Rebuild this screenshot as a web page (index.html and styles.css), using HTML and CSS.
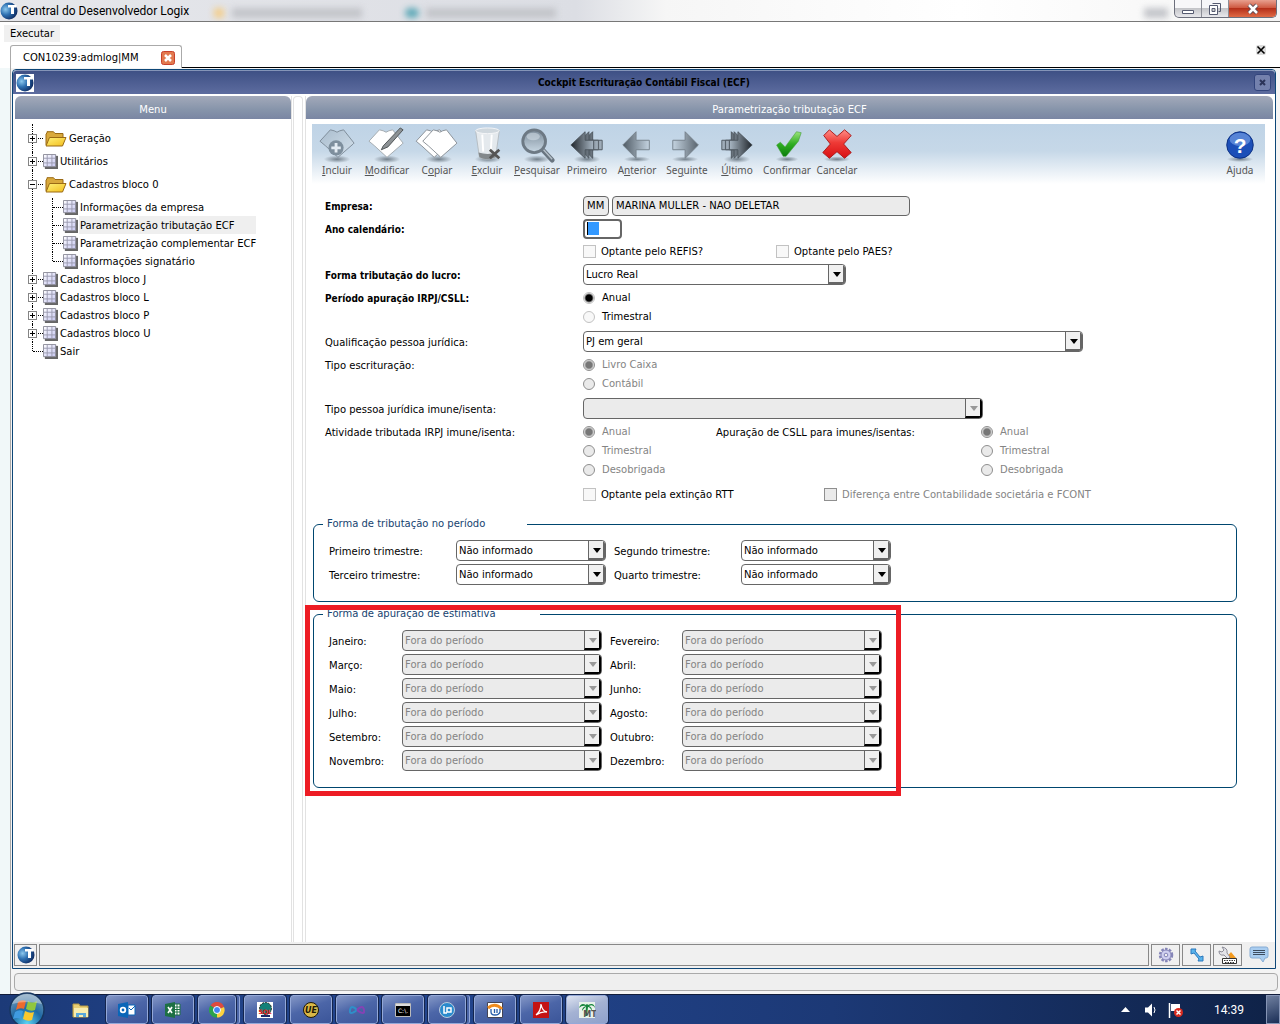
FILE: index.html
```html
<!DOCTYPE html>
<html lang="pt-BR">
<head>
<meta charset="utf-8">
<title>Central do Desenvolvedor Logix</title>
<link rel="stylesheet" href="styles.css">
</head>
<body>
<svg class="defs" aria-hidden="true">
  <defs>
    <radialGradient id="gBlue" cx="30%" cy="40%" r="75%"><stop offset="0" stop-color="#8cc8ee"/><stop offset=".45" stop-color="#2d6fb0"/><stop offset="1" stop-color="#0b2358"/></radialGradient>
    <linearGradient id="gCell" x2="1" y2="1"><stop offset="0" stop-color="#fff"/><stop offset="1" stop-color="#c6c6f2"/></linearGradient>
    <linearGradient id="gFolder" x2="1" y2="1"><stop offset="0" stop-color="#fff27a"/><stop offset="1" stop-color="#f2bd1c"/></linearGradient>
    <linearGradient id="gShirt" x2="1" y2="1"><stop offset="0" stop-color="#a9bccd"/><stop offset="1" stop-color="#d5e2ec"/></linearGradient>
    <linearGradient id="gGreyL"><stop offset="0" stop-color="#4f5a64"/><stop offset="1" stop-color="#c4d3e0"/></linearGradient>
    <linearGradient id="gGreyR"><stop offset="0" stop-color="#c4d3e0"/><stop offset="1" stop-color="#59646e"/></linearGradient>
    <linearGradient id="gDarkL"><stop offset="0" stop-color="#20262c"/><stop offset="1" stop-color="#a9b7c4"/></linearGradient>
    <linearGradient id="gDarkR"><stop offset="0" stop-color="#a9b7c4"/><stop offset="1" stop-color="#20262c"/></linearGradient>
    <linearGradient id="gLens" x2="0" y2="1"><stop offset="0" stop-color="#7b8b99"/><stop offset="1" stop-color="#c9d8e4"/></linearGradient>
    <linearGradient id="gGreen" x2="0" y2="1"><stop offset="0" stop-color="#9be27a"/><stop offset=".5" stop-color="#2fae22"/><stop offset="1" stop-color="#0b7d0c"/></linearGradient>
    <linearGradient id="gRed" x2="0" y2="1"><stop offset="0" stop-color="#ff8d86"/><stop offset=".45" stop-color="#ee3a36"/><stop offset="1" stop-color="#d80f12"/></linearGradient>
    <radialGradient id="gShadow"><stop offset="0" stop-color="#5b6873" stop-opacity=".8"/><stop offset="1" stop-color="#5b6873" stop-opacity="0"/></radialGradient>
    <radialGradient id="gOrb" cx="50%" cy="90%" r="90%"><stop offset="0" stop-color="#5ad4f4"/><stop offset=".5" stop-color="#1f6aa5"/><stop offset="1" stop-color="#7d9db8"/></radialGradient>
  </defs>
  <symbol id="globe" viewBox="0 0 18 18"><circle cx="9" cy="9" r="8.5" fill="url(#gBlue)"/><path d="M8 3h8.500v2.500h-2.500V12h-3V5.500H8z" fill="#fff"/></symbol>
  <symbol id="grid" viewBox="0 0 16 16"><path d="M2 2h14v14H2z" fill="#666"/><path d="M.5.5h13v13H.5z" fill="url(#gCell)" stroke="#8c8c99"/><path d="M4.500 1v12M9.500 1v12M1 4.500h12M1 9.500h12" stroke="#9a9ab0"/></symbol>
  <symbol id="folder" viewBox="0 0 22 16"><path d="M1 14V3l1-1V.7h6.500L10 2.500h8V7" fill="#d9a93c" stroke="#9a6a14"/><path d="M1 15 4.500 6.500H21L17.500 15z" fill="url(#gFolder)" stroke="#9a6a14"/></symbol>
  <symbol id="shirt" viewBox="0 0 38 33"><path d="M12 2 1 14l6 5 13 12 16-14 1-1L26 2l-4 1q-3 3-6 0z"/></symbol>
</svg>

<header class="titlebar">
  <span class="ghost g1"></span><span class="ghost g2"></span><span class="ghost g3"></span><span class="ghost g4"></span><span class="ghost g5"></span>
  <svg class="i18" viewBox="0 0 18 18"><use href="#globe"/></svg>
  <h1>Central do Desenvolvedor Logix</h1>
  <div class="winbtns">
    <button aria-label="Minimizar"><svg width="14" height="14"><path d="M1.500 8.500h11v3h-11z" fill="#fff" stroke="#555a70"/></svg></button>
    <button aria-label="Restaurar"><svg width="14" height="14"><path d="M4.500 1.500h8v8h-2" fill="none" stroke="#555a70"/><path d="M1.500 3.500h8v9h-8z" fill="#fff" stroke="#555a70"/><path d="M4 6.500h3v3H4z" fill="#ccc" stroke="#555a70"/></svg></button>
    <button class="close" aria-label="Fechar"><svg width="14" height="14"><path d="m3 3 8 8M11 3l-8 8" stroke="#5b4a55" stroke-width="4.500"/><path d="m3 3 8 8M11 3l-8 8" stroke="#fff" stroke-width="2.500"/></svg></button>
  </div>
</header>

<nav class="menubar"><button>Executar</button></nav>

<div class="tabs">
  <div class="tab"><span>CON10239:admlog|MM</span><button aria-label="Fechar aba"><svg width="14" height="14"><rect x=".5" y=".5" width="13" height="13" rx="2" fill="#e2794f" stroke="#c8402c"/><path d="m4 4 6 6m0-6-6 6" stroke="#fff" stroke-width="2.500"/></svg></button></div>
  <div class="tabline"><button aria-label="Fechar tudo"><svg width="10" height="10"><rect width="10" height="10" rx="2" fill="#ddd"/><path d="m1.500 1.500 7 7m0-7-7 7" stroke="#000" stroke-width="1.600"/></svg></button></div>
</div>

<main class="desk">
  <section class="win">
    <header class="winhead">
      <svg class="i18 boxed" viewBox="0 0 18 18"><use href="#globe"/></svg>
      <h2>Cockpit Escrituração Contábil Fiscal (ECF)</h2>
      <button aria-label="Fechar janela"><svg width="7" height="7"><path d="m1 1 5 5m0-5-5 5" stroke="#2b3358" stroke-width="2"/></svg></button>
    </header>
    <div class="panes">
      <aside class="pane side">
        <h3>Menu</h3>
        <ul class="tree">
          <li class="tall"><div><button class="plus" aria-label="Expandir"></button><a href="#"><svg class="fold"><use href="#folder"/></svg>Geração</a></div></li>
          <li><div><button class="plus" aria-label="Expandir"></button><a href="#"><svg class="grid"><use href="#grid"/></svg>Utilitários</a></div></li>
          <li class="tall"><div><button aria-label="Recolher"></button><a href="#"><svg class="fold"><use href="#folder"/></svg>Cadastros bloco 0</a></div>
            <ul>
              <li><div><a href="#"><svg class="grid"><use href="#grid"/></svg>Informações da empresa</a></div></li>
              <li><div><a href="#" class="sel"><svg class="grid"><use href="#grid"/></svg>Parametrização tributação ECF</a></div></li>
              <li><div><a href="#"><svg class="grid"><use href="#grid"/></svg>Parametrização complementar ECF</a></div></li>
              <li><div><a href="#"><svg class="grid"><use href="#grid"/></svg>Informações signatário</a></div></li>
            </ul>
          </li>
          <li><div><button class="plus" aria-label="Expandir"></button><a href="#"><svg class="grid"><use href="#grid"/></svg>Cadastros bloco J</a></div></li>
          <li><div><button class="plus" aria-label="Expandir"></button><a href="#"><svg class="grid"><use href="#grid"/></svg>Cadastros bloco L</a></div></li>
          <li><div><button class="plus" aria-label="Expandir"></button><a href="#"><svg class="grid"><use href="#grid"/></svg>Cadastros bloco P</a></div></li>
          <li><div><button class="plus" aria-label="Expandir"></button><a href="#"><svg class="grid"><use href="#grid"/></svg>Cadastros bloco U</a></div></li>
          <li><div><a href="#"><svg class="grid"><use href="#grid"/></svg>Sair</a></div></li>
        </ul>
      </aside>
      <div class="split"></div>
      <section class="pane body">
        <h3>Parametrização tributação ECF</h3>
        <div class="toolbar">
          <button><svg viewBox="0 0 40 38"><ellipse cx="20" cy="34" rx="14" ry="4" fill="url(#gShadow)"/><use href="#shirt" x="1" y="1" width="38" height="33" fill="url(#gShirt)" stroke="#7d8b97" stroke-width="1"/><circle cx="19" cy="22" r="8" fill="#7e8f9d"/><path d="M19 17v10M14 22h10" stroke="#e4ecf3" stroke-width="3"/></svg><span><u>I</u>ncluir</span></button>
          <button><svg viewBox="0 0 40 38"><ellipse cx="20" cy="34" rx="14" ry="4" fill="url(#gShadow)"/><use href="#shirt" x="0" y="1" width="38" height="33" fill="#fff" stroke="#a3a9ae" stroke-width="1"/><path d="m16 20 18-19 3 2-16 18-7 3z" fill="#8d9295" stroke="#4c5154"/></svg><span><u>M</u>odificar</span></button>
          <button><svg viewBox="0 0 44 38"><ellipse cx="24" cy="34" rx="14" ry="4" fill="url(#gShadow)"/><use href="#shirt" x="-1" y="1" width="38" height="33" fill="#fff" stroke="#888f95" stroke-width="1"/><use href="#shirt" x="6" y="1" width="38" height="33" fill="#fff" stroke="#888f95" stroke-width="1"/></svg><span>C<u>o</u>piar</span></button>
          <button><svg viewBox="0 0 40 38"><ellipse cx="21" cy="34" rx="14" ry="4" fill="url(#gShadow)"/><path d="m8 4 4 28q8 4 17 0l4-28z" fill="#e4e9ed" stroke="#b5bcc2"/><path d="m11 27 1 5q8 4 17 0l1-5q-9 3-19 0z" fill="#83888b"/><ellipse cx="20.500" cy="4" rx="12.500" ry="3" fill="#d0d8de" stroke="#f4f6f8"/><path d="m15 8 1 18M25 8l-1 18" stroke="#fff" stroke-width="2"/><path d="m23 24 10 9m0-9-10 9" stroke="#555" stroke-width="3"/></svg><span><u>E</u>xcluir</span></button>
          <button><svg viewBox="0 0 40 38"><ellipse cx="20" cy="34" rx="14" ry="4" fill="url(#gShadow)"/><path d="m25 23 11 12" stroke="#697580" stroke-width="5" stroke-linecap="round"/><path d="m26 23 10 11" stroke="#b4bfc8" stroke-width="1.500"/><circle cx="17" cy="15" r="12" fill="url(#gLens)" stroke="#6d7984" stroke-width="3"/><ellipse cx="16" cy="10" rx="7" ry="4" fill="#dce6ee" opacity=".5"/></svg><span><u>P</u>esquisar</span></button>
          <button><svg viewBox="0 0 40 38"><ellipse cx="20" cy="34" rx="14" ry="4" fill="url(#gShadow)"/><g fill="url(#gDarkL)" stroke="#4d575f"><path d="M12 19 26 5v9h10v10H26v9z"/><path d="M8 19 22 5v9h10v10H22v9z"/><path d="M3 19 18 5v9h9v10h-9v9z"/></g></svg><span>Primeiro</span></button>
          <button><svg viewBox="0 0 40 38"><ellipse cx="20" cy="34" rx="14" ry="3" fill="url(#gShadow)"/><path d="M5 19 19 5v9h14v10H19v9z" fill="url(#gGreyL)" stroke="#75818b"/></svg><span>A<u>n</u>terior</span></button>
          <button><svg viewBox="0 0 40 38"><ellipse cx="18" cy="34" rx="14" ry="3" fill="url(#gShadow)"/><path d="M32 19 18 5v9H5v10h13v9z" fill="url(#gGreyR)" stroke="#75818b"/></svg><span>Se<u>g</u>uinte</span></button>
          <button><svg viewBox="0 0 40 38"><ellipse cx="20" cy="34" rx="14" ry="4" fill="url(#gShadow)"/><g fill="url(#gDarkR)" stroke="#4d575f"><path d="M28 19 14 5v9H4v10h10v9z"/><path d="M31 19 17 5v9H8v10h9v9z"/><path d="M36 19 21 5v9h-9v10h9v9z"/></g></svg><span><u>Ú</u>ltimo</span></button>
          <button><svg viewBox="0 0 40 38"><ellipse cx="20" cy="34" rx="12" ry="3" fill="url(#gShadow)"/><path d="m9 19 4-3 5 5L30 5l5 1-3 9-13 16h-3z" fill="url(#gGreen)" stroke="#3f9c35" stroke-width=".6"/></svg><span>Confirmar</span></button>
          <button><svg viewBox="0 0 40 38"><ellipse cx="20" cy="34" rx="14" ry="3" fill="url(#gShadow)"/><path d="m6 9 6-6 8 7 8-7 7 6-8 9 8 9-7 6-8-7-8 7-7-6 8-9z" fill="url(#gRed)" stroke="#a8191a"/></svg><span>Cancelar</span></button>
          <button class="help"><svg viewBox="0 0 40 38"><ellipse cx="20" cy="34" rx="14" ry="3" fill="url(#gShadow)"/><circle cx="20" cy="19" r="14" fill="#1c4fb8" stroke="#0c2f80"/><ellipse cx="20" cy="13" rx="11" ry="7" fill="#7fa8ea" opacity=".6"/><text x="20" y="27" text-anchor="middle" font-size="22" font-weight="bold" fill="#fff">?</text></svg><span>Ajuda</span></button>
        </div>

        <form class="form">
          <div class="row"><label class="lb b" for="emp">Empresa:</label><input id="emp" class="txt w26" value="MM" readonly><input class="txt w298" value="MARINA MULLER - NÃO DELETAR" aria-label="Nome da empresa" readonly></div>
          <div class="row"><label class="lb b" for="ano">Ano calendário:</label><span class="year"><i></i><input id="ano"></span></div>
          <div class="row in"><label class="ck w193"><input type="checkbox">Optante pelo REFIS?</label><label class="ck"><input type="checkbox">Optante pelo PAES?</label></div>
          <div class="row"><label class="lb b" for="forma">Forma tributação do lucro:</label><span class="sel-box w263"><select id="forma"><option>Lucro Real</option></select></span></div>
          <div class="row group"><span class="lb b">Período apuração IRPJ/CSLL:</span><div class="radios"><label><input type="radio" name="per" checked>Anual</label><label><input type="radio" name="per">Trimestral</label></div></div>
          <div class="row"><label class="lb" for="qual">Qualificação pessoa jurídica:</label><span class="sel-box w500"><select id="qual"><option>PJ em geral</option></select></span></div>
          <div class="row group"><span class="lb">Tipo escrituração:</span><div class="radios off"><label><input type="radio" name="esc" checked disabled>Livro Caixa</label><label><input type="radio" name="esc" disabled>Contábil</label></div></div>
          <div class="row"><label class="lb" for="imune">Tipo pessoa jurídica imune/isenta:</label><span class="sel-box off w400"><select id="imune" disabled><option></option></select></span></div>
          <div class="row group"><span class="lb">Atividade tributada IRPJ imune/isenta:</span><div class="radios off w133"><label><input type="radio" name="atv" checked disabled>Anual</label><label><input type="radio" name="atv" disabled>Trimestral</label><label><input type="radio" name="atv" disabled>Desobrigada</label></div><span class="lb2">Apuração de CSLL para imunes/isentas:</span><div class="radios off"><label><input type="radio" name="csll" checked disabled>Anual</label><label><input type="radio" name="csll" disabled>Trimestral</label><label><input type="radio" name="csll" disabled>Desobrigada</label></div></div>
          <div class="row in"><label class="ck w241"><input type="checkbox">Optante pela extinção RTT</label><label class="ck off"><input type="checkbox" disabled>Diferença entre Contabilidade societária e FCONT</label></div>

          <fieldset class="quarters">
            <legend>Forma de tributação no período</legend>
            <label for="t1">Primeiro trimestre:</label><span class="sel-box"><select id="t1"><option>Não informado</option></select></span>
            <label for="t2">Segundo trimestre:</label><span class="sel-box"><select id="t2"><option>Não informado</option></select></span>
            <label for="t3">Terceiro trimestre:</label><span class="sel-box"><select id="t3"><option>Não informado</option></select></span>
            <label for="t4">Quarto trimestre:</label><span class="sel-box"><select id="t4"><option>Não informado</option></select></span>
          </fieldset>
          <div class="marked">
            <fieldset class="months">
              <legend>Forma de apuração de estimativa</legend>
              <label for="m1">Janeiro:</label><span class="sel-box off"><select id="m1" disabled><option>Fora do período</option></select></span>
              <label for="m2">Fevereiro:</label><span class="sel-box off"><select id="m2" disabled><option>Fora do período</option></select></span>
              <label for="m3">Março:</label><span class="sel-box off"><select id="m3" disabled><option>Fora do período</option></select></span>
              <label for="m4">Abril:</label><span class="sel-box off"><select id="m4" disabled><option>Fora do período</option></select></span>
              <label for="m5">Maio:</label><span class="sel-box off"><select id="m5" disabled><option>Fora do período</option></select></span>
              <label for="m6">Junho:</label><span class="sel-box off"><select id="m6" disabled><option>Fora do período</option></select></span>
              <label for="m7">Julho:</label><span class="sel-box off"><select id="m7" disabled><option>Fora do período</option></select></span>
              <label for="m8">Agosto:</label><span class="sel-box off"><select id="m8" disabled><option>Fora do período</option></select></span>
              <label for="m9">Setembro:</label><span class="sel-box off"><select id="m9" disabled><option>Fora do período</option></select></span>
              <label for="m10">Outubro:</label><span class="sel-box off"><select id="m10" disabled><option>Fora do período</option></select></span>
              <label for="m11">Novembro:</label><span class="sel-box off"><select id="m11" disabled><option>Fora do período</option></select></span>
              <label for="m12">Dezembro:</label><span class="sel-box off"><select id="m12" disabled><option>Fora do período</option></select></span>
            </fieldset>
            <div class="highlight"></div>
          </div>
        </form>
      </section>
    </div>
    <footer class="status">
      <button class="logo" aria-label="TOTVS"><svg class="i18" viewBox="0 0 18 18"><use href="#globe"/></svg></button>
      <div class="msg"></div>
      <button aria-label="Configurações"><svg width="16" height="16" viewBox="0 0 16 16"><circle cx="8" cy="8" r="6" fill="none" stroke="#8585b8" stroke-width="2.500" stroke-dasharray="2.500 1.300"/><circle cx="8" cy="8" r="5" fill="#cfcff0" stroke="#8585b8"/><circle cx="8" cy="8" r="1.800" fill="#f0f0f0" stroke="#8585b8"/></svg></button>
      <button aria-label="Redimensionar"><svg width="14" height="14" viewBox="0 0 14 14"><path d="M1 1h5L5 3l5 6 3-1v5H8l1-2-5-6-3 1z" fill="#5bb4ec" stroke="#2a78bd"/></svg></button>
      <button aria-label="Ferramentas"><svg width="20" height="20" viewBox="0 0 20 20"><path d="M8 13 13 7l5 6z" fill="#f39a1e"/><path d="m4 2 2 3-2 2-3-1q0 5 5 4l4 4 2-2-3-4q1-5-5-6z" fill="#e3e3e8" stroke="#8d8d99"/><path d="M4.500 13.500h14v5h-14z" fill="#fff" stroke="#333"/><path d="M6 15.500h11M7 17.500h9" stroke="#333" stroke-dasharray="1.500 1"/></svg></button>
      <button class="chat" aria-label="Mensagens"><svg width="20" height="18" viewBox="0 0 20 18"><path d="M3 1h14q2 0 2 2v7q0 2-2 2h-1l-2 4-3-4H3q-2 0-2-2V3q0-2 2-2z" fill="#a9cdf0" stroke="#86acd4"/><path d="M4 4.500h12M4 6.500h12M4 8.500h12" stroke="#3c4c60"/></svg></button>
    </footer>
  </section>
  <div class="outer-status"></div>
</main>

<footer class="taskbar">
  <button class="orb" aria-label="Iniciar"><svg width="38" height="36" viewBox="0 0 38 36"><circle cx="19" cy="18" r="17" fill="url(#gOrb)" stroke="#17365f" stroke-width="1.500"/><path d="M10 10q4-3 8-1l-2 8q-4-2-8 1z" fill="#ee6a2c"/><path d="M20 9q4 3 9 0l-2 9q-4 2-9-1z" fill="#90c63e"/><path d="M7 20q4-3 8-1l-2 8q-4-2-8 0z" fill="#3f9be0"/><path d="M17 19q5 3 9 1l-2 8q-4 2-9-1z" fill="#fbc92e"/><path d="M4 12Q8 2 19 2t15 10q-15-4-30 0z" fill="#fff" opacity=".35"/></svg></button>
  <button class="plain" aria-label="Explorador"><svg width="18" height="16" viewBox="0 0 18 16"><path d="M1 2h6l1 2h8v11H1z" fill="#e9cf74" stroke="#b79a45"/><path d="M2 6h14v9H2z" fill="#f8ecae"/><path d="M4 15v-4h10v4h-3v-2H7v2z" fill="#58a7da"/></svg></button>
  <div class="apps">
    <button aria-label="Outlook"><svg width="18" height="18"><path d="M0 3 10 1v16L0 15z" fill="#0a66b8"/><path d="M10 4h7v10h-7z" fill="#fff" stroke="#0a66b8"/><path d="m11 7 2 2 4-4" stroke="#0a66b8" fill="none"/><circle cx="5" cy="9" r="2.300" fill="none" stroke="#fff" stroke-width="1.800"/></svg></button>
    <button aria-label="Excel"><svg width="18" height="18"><path d="M9 3h7v11H9z" fill="#fff" stroke="#1d7044"/><path d="M10 6h6M10 8.500h6M10 11h6M13 3v11" stroke="#1d7044"/><path d="M1 3 11 1v16L1 15z" fill="#1d7044"/><path d="m4 6 4 6m0-6-4 6" stroke="#fff" stroke-width="1.600"/></svg></button>
    <button class="multi" aria-label="Chrome"><svg width="16" height="16" viewBox="0 0 16 16"><path d="M8 8 1.500 3.500A7.500 7.500 0 0 1 15 5z" fill="#dd4b3e"/><path d="M8 8 15 5A7.500 7.500 0 0 1 8 15.500z" fill="#fdd23e"/><path d="M8 8v7.500A7.500 7.500 0 0 1 1.500 3.500z" fill="#2ba24c"/><circle cx="8" cy="8" r="3.500" fill="#4285f4" stroke="#fff"/></svg></button>
    <button aria-label="SQL"><svg width="16" height="16"><path d="M0 0h16v16H0z" fill="#fff"/><circle cx="8.500" cy="6.500" r="6" fill="#138078" stroke="#222" stroke-dasharray="2 1"/><path d="M4 13h9v2H4z" fill="#1c2a6a"/><text x="8" y="12" text-anchor="middle" font-size="6" font-weight="bold" fill="#e11">SQL</text></svg></button>
    <button aria-label="UltraEdit"><svg width="16" height="16"><circle cx="8" cy="8" r="7.500" fill="#d9b847" stroke="#1d1805"/><text x="8" y="11" text-anchor="middle" font-size="8" font-weight="bold" font-style="italic" fill="#1d1805">UE</text></svg></button>
    <button aria-label="Visual Studio"><svg width="16" height="16" fill="none" stroke-width="2"><path d="M8 8q-6-6-7 0t7 0" stroke="#2f8fc8"/><path d="M8 8q6-6 7 0t-7 0" stroke="#8443b4"/></svg></button>
    <button aria-label="Prompt"><svg width="16" height="14"><path d="M.5.5h15v13H.5z" fill="#000" stroke="#bbb"/><path d="M1 1h14v2H1z" fill="#ddd"/><text x="8" y="10" text-anchor="middle" font-size="6" fill="#fff">C:\.</text></svg></button>
    <button class="multi" aria-label="Logix"><svg width="16" height="16"><circle cx="8" cy="8" r="7.500" fill="#2a8bcd" stroke="#bcd"/><path d="M5 4v7h3M8 6h4v4H8z" stroke="#fff" stroke-width="1.500" fill="none"/></svg></button>
    <button aria-label="Atendimento"><svg width="16" height="16"><path d="M.5.500h15v15H.5z" fill="#fff" stroke="#445"/><path d="M1 6q7-6 14 1" stroke="#f08c1e" stroke-width="3" fill="none"/><path d="M4 7v3q0 3 4 3t5-3V7M7.500 7v4M10 7v4" stroke="#245ba8" fill="none" stroke-width="1.300"/></svg></button>
    <button aria-label="Adobe Reader"><svg width="16" height="16"><path d="M0 0h16v16H0z" fill="#c41313"/><path d="M3 13q5-4 5-11 1 7 6 8-5-1-11 3z" fill="none" stroke="#fff" stroke-width="1.300"/></svg></button>
    <button class="active" aria-label="MT"><svg width="18" height="18"><path d="M1 1h16v16H1z" fill="#e8f2ea"/><path d="M8 4q-5-3-7 3 3-3 7-2-4 1-4 5 3-4 4-4l-1 9h2l1-9q2 0 4 4 0-4-3-5 4-2 6 2-1-6-7-3-1-2-2 0z" fill="#16863c"/><text x="12" y="16" text-anchor="middle" font-size="8" font-weight="bold" fill="#555">MT</text></svg></button>
  </div>
  <div class="tray">
    <svg width="9" height="5"><path d="M0 5 4.500 0 9 5z" fill="#fff"/></svg>
    <svg width="14" height="14"><path d="M1 4.500h3l4-4v13l-4-4H1z" fill="#fff"/><path d="M10 4q2 3 0 6" fill="none" stroke="#fff"/></svg>
    <svg width="16" height="16"><path d="M1.500 1v15" stroke="#fff" stroke-width="1.500"/><path d="M3 2h9v7H3z" fill="#fff"/><circle cx="10.500" cy="10.500" r="4.500" fill="#d92b1f"/><path d="m8.500 8.500 4 4m0-4-4 4" stroke="#fff" stroke-width="1.500"/></svg>
    <time>14:39</time>
    <button class="peek" aria-label="Mostrar área de trabalho"></button>
  </div>
</footer>
</body>
</html>
```
FILE: styles.css
```css
*, *::before, *::after { box-sizing: border-box; }
body { margin: 0; min-height: 100vh; display: flex; flex-direction: column; background: #fff; color: #000; font: 10px/14px "DejaVu Sans", Verdana, sans-serif; }
button, input, select { font: inherit; color: inherit; margin: 0; padding: 0; border: 0; background: none; }
h1, h2, h3, ul { margin: 0; padding: 0; font: inherit; list-style: none; }
a { color: inherit; text-decoration: none; }
svg { display: block; flex: none; }
.defs { position: absolute; width: 0; height: 0; }
.i18 { width: 18px; height: 18px; }

.titlebar { position: relative; display: flex; align-items: center; height: 22px; overflow: hidden; border-bottom: 1px solid #777; background: linear-gradient(90deg, #e6e7eb, #dcdee4 45%, #f6f6f6 52%, #fff 75%, #f4f4f4); }
.titlebar h1 { position: relative; flex: 1; padding-left: 3px; font: 12px/20px Roboto, sans-serif; }
.ghost { position: absolute; top: 8px; height: 10px; filter: blur(3px); background: #c3c5ca; }
.g1 { left: 214px; width: 10px; background: #f3cf8e; }
.g2 { left: 232px; width: 130px; }
.g3 { left: 405px; width: 14px; border-radius: 8px; background: #5fa9b8; }
.g4 { left: 426px; width: 130px; }
.g5 { right: 112px; width: 24px; }
.winbtns { position: relative; display: flex; align-self: flex-start; height: 18px; margin-right: 3px; border: 1px solid #6c6f7c; border-top: 0; border-radius: 0 0 5px 5px; overflow: hidden; background: linear-gradient(#f7f7f9 45%, #c4c5c9 50%, #e8e8ec); }
.winbtns button { display: grid; place-items: center; width: 27px; border-right: 1px solid #8b8d96; }
.winbtns .close { width: 47px; border: 0; background: linear-gradient(#e8a08f, #cf5a42 45%, #b5301a 50%, #e06a45); }

.menubar { height: 23px; padding: 3px 4px; }
.menubar button { height: 17px; padding: 0 6px; background: #f0f0f0; }

.tabs { display: flex; height: 23px; padding-left: 10px; }
.tab { display: flex; align-items: center; justify-content: space-between; width: 172px; padding: 1px 6px 0 12px; border: 1px solid #aaa; border-bottom: 0; border-radius: 3px 3px 0 0; }
.tabline { flex: 1; display: flex; justify-content: flex-end; align-items: flex-start; padding-right: 14px; border-bottom: 1px solid #000; }

.desk { flex: 1; display: flex; flex-direction: column; margin-left: 10px; padding: 1px 2px 2px 1px; border-left: 1px solid #aaa; box-shadow: -10px 0 #f1f8f9; background: #f4f4f4; }
.win { flex: 1; display: flex; flex-direction: column; margin-right: 2px; border: 1px solid #0d4677; border-radius: 4px 4px 0 0; background: #fff; }
.winhead { display: flex; align-items: center; height: 24px; padding: 0 4px 0 3px; border-top: 1px solid #8494b8; border-radius: 4px 4px 0 0; background: linear-gradient(#3e5085, #5d6c9f); }
.boxed { background: #fff; }
.winhead h2 { flex: 1; text-align: center; font: bold 10px/14px "DejaVu Sans Condensed", "DejaVu Sans", sans-serif; }
.winhead button { display: grid; place-items: center; width: 17px; height: 17px; border: 1px solid #32447c; border-radius: 3px; background: #7481ad; }

.panes { flex: 1; display: flex; padding: 2px 2px 0; }
.pane h3 { height: 23px; line-height: 27px; text-align: center; color: #fff; border-radius: 6px 6px 0 0; background: linear-gradient(#a3a9ba, #8694aa 60%, #7a86a3); }
.side { width: 277px; border-right: 1px solid #e2e2e2; }
.split { width: 10px; margin: 0 2px 0 1px; border: 1px solid #e2e2e2; border-bottom: 0; border-radius: 4px 4px 0 0; }
.body { flex: 1; min-width: 0; border-left: 1px solid #e2e2e2; }

.tree { padding: 5px 0 0 13px; }
.tree li { position: relative; }
.tree div { display: flex; align-items: center; height: 18px; padding-left: 15px; }
.tree .tall > div { height: 28px; }
.tree li::before { content: ""; position: absolute; left: 4px; top: 0; bottom: 0; border-left: 1px dotted #000; }
.tree li:last-child::before { bottom: 9px; }
.tree > li > div::before, .tree ul li > div::before { content: ""; width: 10px; margin-left: -10px; border-top: 1px dotted #000; }
.tree a { position: relative; display: flex; align-items: center; gap: 2px; height: 18px; padding-top: 1px; white-space: nowrap; }
.tree button { position: absolute; left: 0; width: 9px; height: 9px; border: 1px solid #848484; background: linear-gradient(#000, #000) center / 5px 1px no-repeat #fff; }
.tree .plus { background: linear-gradient(#000, #000) center / 5px 1px no-repeat, linear-gradient(#000, #000) center / 1px 5px no-repeat #fff; }
.tree .fold { width: 22px; height: 16px; margin-left: 2px; }
.tree .grid { width: 15px; height: 15px; }
.tree ul { margin-left: 20px; }
.tree .sel { padding-right: 22px; background: linear-gradient(90deg, #fff 16px, #efefef 16px); }

.toolbar { display: flex; height: 60px; margin: 5px 8px 0 6px; background: linear-gradient(#bfd3e6, #c6d8e8 45%, #fff); }
.toolbar button { display: flex; flex-direction: column; align-items: center; width: 50px; padding-top: 3px; color: #555; font: 10px/14px "Noto Sans", sans-serif; }
.toolbar svg { width: 44px; height: 36px; }
.toolbar .help { margin: 0 0 0 auto; }
.toolbar text { font-family: "Liberation Sans", sans-serif; }

.form { padding: 10px 36px 0 7px; }
.row { display: flex; align-items: center; height: 23px; }
.row.in { padding-left: 270px; }
.lb { width: 258px; margin-left: 12px; padding-top: 2px; }
.b { font: bold 10px/14px "DejaVu Sans Condensed", "DejaVu Sans", sans-serif; }
.group { align-items: flex-start; height: auto; margin: 2px 0 4px; }
.group .lb, .lb2 { padding-top: 4px; }
.lb2 { width: 265px; }
.radios label { display: flex; align-items: center; height: 19px; }
.off { color: #848484; }
input[type=radio], input[type=checkbox] { appearance: none; width: 13px; height: 13px; border: 1px solid #c2c2c2; background: #f8f8f8; }
input[type=radio] { width: 12px; height: 12px; margin-right: 7px; border-radius: 50%; }
input[type=radio]:checked { background: radial-gradient(#000 3px, #eee 5px); }
input:disabled { border-color: #8f8f8f; background: #eaeaea; }
input[type=radio]:checked:disabled { background: radial-gradient(#777 3px, #eaeaea 5px); }
.ck { display: flex; align-items: center; }
.ck input { margin-right: 5px; }
.txt { height: 20px; padding: 0 3px; border: 1px solid #666; border-radius: 4px; background: #ebebeb; line-height: 18px; }
.w26 { width: 26px; margin-right: 3px; }
.w298 { width: 298px; }
.w193 { width: 193px; }
.w241 { width: 241px; }
.w133 { width: 133px; }
.w263 { width: 263px; }
.w400 { width: 400px; }
.w500 { width: 500px; }
.year { display: flex; align-items: center; width: 39px; height: 20px; padding-left: 2px; border: 2px solid #666; border-radius: 4px; }
.year i { flex: none; width: 12px; height: 13px; border-left: 1px solid #000; background: #3399ff; }
.year input { width: 18px; }

.sel-box { position: relative; display: block; height: 21px; border: 1px solid #666; border-radius: 4px; overflow: hidden; }
.sel-box select { appearance: none; display: block; width: 100%; height: 19px; padding: 0 20px 0 2px; color: inherit; opacity: 1; }
.sel-box::before { content: ""; position: absolute; right: 0; top: 0; width: 17px; height: 19px; border: 1px solid #666; border-width: 0 2px 2px 1px; background: #f0f0f0; pointer-events: none; }
.sel-box::after { content: ""; position: absolute; right: 4px; top: 7px; border: 4px solid transparent; border-top: 5px solid #000; border-bottom: 0; pointer-events: none; }
.sel-box.off { background: #ebebeb; }
.sel-box.off::before { border-right-color: #000; border-bottom-color: #000; }
.sel-box.off::after { border-top-color: #999; }

fieldset { display: grid; justify-content: start; align-items: center; row-gap: 3px; min-width: 0; margin: 0; border: 1px solid #00466f; border-radius: 6px; }
fieldset label { padding-top: 2px; }
legend { padding: 0 42px 0 4px; color: #15436f; }
.quarters { grid-template-columns: 127px 150px 135px 150px; padding: 9px 15px 16px; margin-top: 11px; }
.quarters label:nth-of-type(even), .months label:nth-of-type(even) { padding-left: 8px; }
.quarters legend, .months legend { margin-left: -6px; }
.months { grid-template-columns: 73px 200px 80px 200px; padding: 9px 15px 16px; }
.months legend { padding-right: 44px; }
.marked { position: relative; margin-top: 5px; }
.highlight { position: absolute; left: -8px; top: -2px; bottom: -8px; width: 596px; border: 5px solid #ed1c24; pointer-events: none; }

.status { display: flex; align-items: center; gap: 2px; height: 26px; padding: 0 4px 0 1px; background: #f0f0f0; }
.status > * { height: 22px; border: 1px solid #888; }
.status button { display: grid; place-items: center; width: 29px; }
.status .logo { width: 23px; }
.status .msg { flex: 1; }
.status .chat { width: 24px; margin-left: 3px; border: 0; }
.outer-status { height: 18px; margin: 4px 0 1px 2px; border: 1px solid #aaa; border-radius: 4px; background: #efefef; }

.taskbar { display: flex; align-items: flex-end; height: 30px; border-top: 1px solid #111c3a; background: linear-gradient(90deg, #1c3a78, #234690 30%, #1c3976 65%, #0f2247); color: #fff; }
.orb { margin: 0 0 -4px 8px; }
.plain { margin: 0 16px 6px 26px; }
.apps { display: flex; gap: 4px; height: 29px; }
.apps button { display: grid; place-items: center; width: 42px; border: 1px solid #93a8d8; border-radius: 3px; background: linear-gradient(160deg, #8497c6, #4c66a8 45%, #3b5599); outline: 1px solid #14254d; }
.apps .multi { width: 38px; margin-right: 4px; box-shadow: 3px 0 #4c66a8, 4px 0 #93a8d8; }
.apps .active { background: linear-gradient(160deg, #dde3f0, #a4b2d3 45%, #8fa1cb); }
.tray { flex: 1; display: flex; align-items: center; justify-content: flex-end; gap: 10px; height: 29px; }
.tray svg:first-child { margin-right: 4px; }
.tray time { margin: 0 12px 0 20px; font: 12px/16px "Open Sans", sans-serif; }
.tray time { font-family: Roboto, sans-serif; }
.peek { width: 14px; height: 29px; border: 1px solid #8594b5; background: linear-gradient(160deg, #6f7f9f, #1b2f57); }
```
